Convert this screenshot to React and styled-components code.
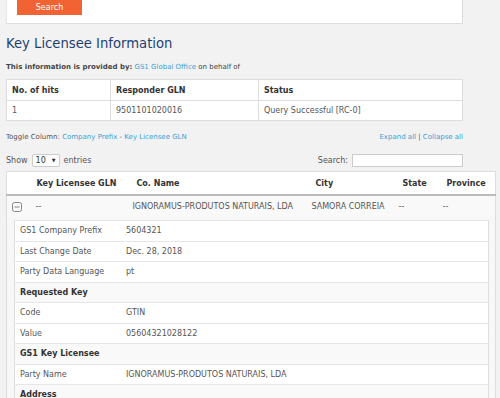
import React from "react";
import styled, { createGlobalStyle } from "styled-components";

const GlobalStyle = createGlobalStyle`
  body {
    margin: 0;
    background: #f2f2f2;
    font-family: "DejaVu Sans", Verdana, sans-serif;
    color: #555;
    font-size: 8px;
  }
`;

const Page = styled.div`
  padding-left: 6px;
  width: 490px;
`;

const SearchCard = styled.div`
  width: 457px;
  height: 24px;
  background: #fff;
  border-right: 1px solid #ddd;
  border-bottom: 1px solid #ddd;
  border-left: 1px solid #e6e6e6;
  box-sizing: border-box;
`;

const SearchButton = styled.button`
  display: block;
  margin-left: 10px;
  width: 65px;
  height: 15px;
  border: none;
  background: #f26334;
  color: #fff;
  font-family: inherit;
  font-size: 8px;
  padding: 0;
`;

const Heading = styled.h2`
  margin: 8px 0 0;
  font-size: 13.2px;
  font-weight: normal;
  color: #1f3f74;
  height: 24px;
  line-height: 24px;
`;

const Provided = styled.div`
  margin-top: 6px;
  font-size: 7px;
  height: 10px;
  line-height: 10px;
  color: #444;
  b {
    font-weight: bold;
  }
`;

const Link = styled.a`
  color: #3a9fd6;
  text-decoration: none;
`;

const InfoTable = styled.table`
  margin-top: 7px;
  width: 457px;
  border-collapse: collapse;
  background: #fff;
  table-layout: fixed;
  th,
  td {
    border: 1px solid #ddd;
    text-align: left;
    padding: 0 0 0 5px;
    font-size: 8px;
  }
  th {
    height: 20px;
    color: #333;
    font-weight: bold;
  }
  td {
    height: 19px;
  }
`;

const ToolRow = styled.div`
  display: flex;
  justify-content: space-between;
  align-items: center;
  width: 457px;
  margin-top: 10px;
  height: 12px;
  font-size: 7px;
`;

const Controls = styled.div`
  display: flex;
  justify-content: space-between;
  align-items: center;
  width: 457px;
  margin-top: 10px;
  height: 14px;
  font-size: 8px;
`;

const Inline = styled.label`
  display: flex;
  align-items: center;
  gap: 4px;
`;

const FakeSelect = styled.span`
  display: inline-flex;
  align-items: center;
  justify-content: space-between;
  box-sizing: border-box;
  width: 28px;
  height: 13px;
  padding: 0 3px;
  background: #fff;
  border: 1px solid #ccc;
  border-radius: 2px;
  color: #333;
  font-size: 8px;
  &::after {
    content: "▼";
    font-size: 5px;
    color: #333;
  }
`;

const SearchInput = styled.span`
  display: inline-block;
  box-sizing: border-box;
  width: 111px;
  height: 13px;
  background: #fff;
  border: 1px solid #ccc;
`;

const MainTable = styled.table`
  margin-top: 4px;
  width: 490px;
  border-collapse: collapse;
  table-layout: fixed;
  background: #fafafa;
  border: 1px solid #ddd;
  th {
    height: 22px;
    text-align: left;
    padding: 0 0 0 8px;
    color: #333;
    font-size: 8px;
    font-weight: bold;
    background: #fff;
    border-bottom: 2px solid #bbb;
  }
  > tbody > tr > td {
    padding: 0 0 0 4px;
    font-size: 8px;
    color: #555;
  }
`;

const MainRow = styled.tr`
  height: 22px;
  background: #f9f9f9;
`;

const DetailCell = styled.td`
  && {
    padding: 3px 6px 0 7px;
    background: #f7f7f7;
  }
`;

const DetailTable = styled.table`
  width: 100%;
  border-collapse: collapse;
  background: #fff;
  border: 1px solid #ddd;
  td {
    height: 19.5px;
    padding: 0 0 0 5px;
    border-top: 1px solid #e6e6e6;
    font-size: 8px;
    color: #555;
  }
  td:first-child {
    width: 101px;
  }
`;

const SectionRow = styled.tr`
  td {
    background: #f9f9f9;
    font-weight: bold;
    color: #333;
  }
`;

const ExpandIcon = () => (
  <svg width="10" height="10" viewBox="0 0 10 10" style={{ display: "block", marginLeft: 1 }}>
    <rect x="0.5" y="0.5" width="9" height="9" rx="2" fill="none" stroke="#888" />
    <line x1="2.5" y1="5" x2="7.5" y2="5" stroke="#888" />
  </svg>
);

const details = [
  ["GS1 Company Prefix", "5604321"],
  ["Last Change Date", "Dec. 28, 2018"],
  ["Party Data Language", "pt"],
  ["Requested Key"],
  ["Code", "GTIN"],
  ["Value", "05604321028122"],
  ["GS1 Key Licensee"],
  ["Party Name", "IGNORAMUS-PRODUTOS NATURAIS, LDA"],
  ["Address"],
];

export default function App() {
  return (
    <Page>
      <GlobalStyle />
      <SearchCard>
        <SearchButton>Search</SearchButton>
      </SearchCard>
      <Heading>Key Licensee Information</Heading>
      <Provided>
        <b>This information is provided by:</b> <Link>GS1 Global Office</Link> on behalf of
      </Provided>
      <InfoTable>
        <colgroup>
          <col style={{ width: 104 }} />
          <col style={{ width: 148 }} />
          <col />
        </colgroup>
        <thead>
          <tr>
            <th>No. of hits</th>
            <th>Responder GLN</th>
            <th>Status</th>
          </tr>
        </thead>
        <tbody>
          <tr>
            <td>1</td>
            <td>9501101020016</td>
            <td>Query Successful [RC-0]</td>
          </tr>
        </tbody>
      </InfoTable>
      <ToolRow>
        <span>
          Toggle Column: <Link>Company Prefix</Link> - <Link>Key Licensee GLN</Link>
        </span>
        <span>
          <Link>Expand all</Link> | <Link>Collapse all</Link>
        </span>
      </ToolRow>
      <Controls>
        <Inline>
          Show <FakeSelect>10</FakeSelect> entries
        </Inline>
        <Inline>
          Search: <SearchInput />
        </Inline>
      </Controls>
      <MainTable>
        <colgroup>
          <col style={{ width: 25 }} />
          <col style={{ width: 97 }} />
          <col style={{ width: 179 }} />
          <col style={{ width: 87 }} />
          <col style={{ width: 44 }} />
          <col />
        </colgroup>
        <thead>
          <tr>
            <th></th>
            <th style={{ paddingLeft: 5 }}>Key Licensee GLN</th>
            <th>Co. Name</th>
            <th>City</th>
            <th>State</th>
            <th>Province</th>
          </tr>
        </thead>
        <tbody>
          <MainRow>
            <td>
              <ExpandIcon />
            </td>
            <td>--</td>
            <td>IGNORAMUS-PRODUTOS NATURAIS, LDA</td>
            <td>SAMORA CORREIA</td>
            <td>--</td>
            <td>--</td>
          </MainRow>
          <tr>
            <DetailCell colSpan={6}>
              <DetailTable>
                <tbody>
                  {details.map(([label, value]) =>
                    value === undefined ? (
                      <SectionRow key={label}>
                        <td colSpan={2}>{label}</td>
                      </SectionRow>
                    ) : (
                      <tr key={label}>
                        <td>{label}</td>
                        <td>{value}</td>
                      </tr>
                    )
                  )}
                </tbody>
              </DetailTable>
            </DetailCell>
          </tr>
        </tbody>
      </MainTable>
    </Page>
  );
}
